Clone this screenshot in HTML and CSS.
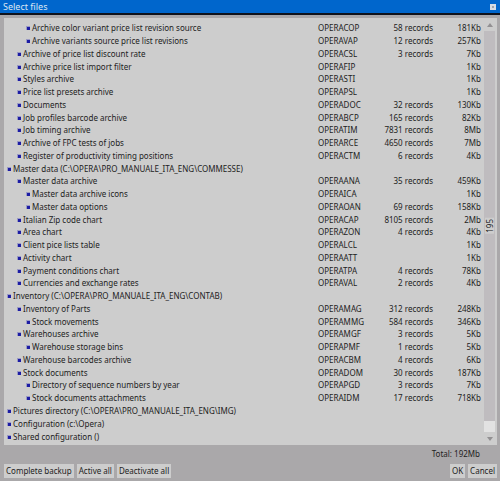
FILE: index.html
```html
<!DOCTYPE html>
<html lang="en">
<head>
  <meta charset="UTF-8">
  <title>Select files</title>
  <link rel="stylesheet" href="styles.css">
</head>
<body>
<div class="titlebar">
  <h1>Select files</h1>
  <button class="close" type="button" aria-label="Close">
    <svg width="6" height="6" viewBox="0 0 6 6"><rect width="6" height="6" fill="#d4dce4"/><rect x="2" y="2" width="2" height="2" fill="#9aa4b0"/></svg>
  </button>
</div>
<div class="panel">
  <div class="list">
    <table class="files">
      <colgroup>
        <col>
        <col class="col-code">
        <col class="col-records">
        <col class="col-size">
      </colgroup>
      <tbody>
        <tr class="l3"><td>Archive color variant price list revision source</td><td>OPERACOP</td><td>58 records</td><td>181Kb</td></tr>
        <tr class="l3"><td>Archive variants source price list revisions</td><td>OPERAVAP</td><td>12 records</td><td>257Kb</td></tr>
        <tr class="l2"><td>Archive of price list discount rate</td><td>OPERACSL</td><td>3 records</td><td>7Kb</td></tr>
        <tr class="l2"><td>Archive price list import filter</td><td>OPERAFIP</td><td></td><td>1Kb</td></tr>
        <tr class="l2"><td>Styles archive</td><td>OPERASTI</td><td></td><td>1Kb</td></tr>
        <tr class="l2"><td>Price list presets archive</td><td>OPERAPSL</td><td></td><td>1Kb</td></tr>
        <tr class="l2"><td>Documents</td><td>OPERADOC</td><td>32 records</td><td>130Kb</td></tr>
        <tr class="l2"><td>Job profiles barcode archive</td><td>OPERABCP</td><td>165 records</td><td>82Kb</td></tr>
        <tr class="l2"><td>Job timing archive</td><td>OPERATIM</td><td>7831 records</td><td>8Mb</td></tr>
        <tr class="l2"><td>Archive of FPC tests of jobs</td><td>OPERARCE</td><td>4650 records</td><td>7Mb</td></tr>
        <tr class="l2"><td>Register of productivity timing positions</td><td>OPERACTM</td><td>6 records</td><td>4Kb</td></tr>
        <tr class="l1"><td>Master data (C:\OPERA\PRO_MANUALE_ITA_ENG\COMMESSE)</td><td></td><td></td><td></td></tr>
        <tr class="l2"><td>Master data archive</td><td>OPERAANA</td><td>35 records</td><td>459Kb</td></tr>
        <tr class="l3"><td>Master data archive icons</td><td>OPERAICA</td><td></td><td>1Kb</td></tr>
        <tr class="l3"><td>Master data options</td><td>OPERAOAN</td><td>69 records</td><td>158Kb</td></tr>
        <tr class="l2"><td>Italian Zip code chart</td><td>OPERACAP</td><td>8105 records</td><td>2Mb</td></tr>
        <tr class="l2"><td>Area chart</td><td>OPERAZON</td><td>4 records</td><td>4Kb</td></tr>
        <tr class="l2"><td>Client pice lists table</td><td>OPERALCL</td><td></td><td>1Kb</td></tr>
        <tr class="l2"><td>Activity chart</td><td>OPERAATT</td><td></td><td>1Kb</td></tr>
        <tr class="l2"><td>Payment conditions chart</td><td>OPERATPA</td><td>4 records</td><td>78Kb</td></tr>
        <tr class="l2"><td>Currencies and exchange rates</td><td>OPERAVAL</td><td>2 records</td><td>4Kb</td></tr>
        <tr class="l1"><td>Inventory (C:\OPERA\PRO_MANUALE_ITA_ENG\CONTAB)</td><td></td><td></td><td></td></tr>
        <tr class="l2"><td>Inventory of Parts</td><td>OPERAMAG</td><td>312 records</td><td>248Kb</td></tr>
        <tr class="l3"><td>Stock movements</td><td>OPERAMMG</td><td>584 records</td><td>346Kb</td></tr>
        <tr class="l2"><td>Warehouses archive</td><td>OPERAMGF</td><td>3 records</td><td>5Kb</td></tr>
        <tr class="l3"><td>Warehouse storage bins</td><td>OPERAPMF</td><td>1 records</td><td>5Kb</td></tr>
        <tr class="l2"><td>Warehouse barcodes archive</td><td>OPERACBM</td><td>4 records</td><td>6Kb</td></tr>
        <tr class="l2"><td>Stock documents</td><td>OPERADOM</td><td>30 records</td><td>187Kb</td></tr>
        <tr class="l3"><td>Directory of sequence numbers by year</td><td>OPERAPGD</td><td>3 records</td><td>7Kb</td></tr>
        <tr class="l3"><td>Stock documents attachments</td><td>OPERAIDM</td><td>17 records</td><td>718Kb</td></tr>
        <tr class="l1"><td>Pictures directory (C:\OPERA\PRO_MANUALE_ITA_ENG\IMG)</td><td></td><td></td><td></td></tr>
        <tr class="l1"><td>Configuration (c:\Opera)</td><td></td><td></td><td></td></tr>
        <tr class="l1"><td>Shared configuration ()</td><td></td><td></td><td></td></tr>
      </tbody>
    </table>
  </div>
  <div class="scrollbar">
    <button class="arrow" type="button" aria-label="Scroll up"><svg width="6" height="4" viewBox="0 0 6 4"><path d="M0 4L3 0L6 4Z" fill="#929092"/></svg></button>
    <div class="track">
      <span class="count">195</span>
      <div class="thumb"></div>
    </div>
    <button class="arrow" type="button" aria-label="Scroll down"><svg width="6" height="4" viewBox="0 0 6 4"><path d="M0 0L3 4L6 0Z" fill="#929092"/></svg></button>
  </div>
</div>
<p class="total">Total: 192Mb</p>
<div class="buttons">
  <button type="button">Complete backup</button>
  <button type="button">Active all</button>
  <button type="button">Deactivate all</button>
  <button class="ok" type="button">OK</button>
  <button type="button">Cancel</button>
</div>
</body>
</html>
```
FILE: styles.css
```css
*,
*::before {
  box-sizing: border-box;
  margin: 0;
  padding: 0;
}

body {
  display: flex;
  flex-direction: column;
  min-height: 100vh;
  background: #aaa8aa;
  color: #222;
  font-family: "Noto Sans", "Open Sans", sans-serif;
  font-size: 8px;
  line-height: 12px;
}

button {
  border: 0;
  color: inherit;
  font: inherit;
}

.titlebar {
  display: flex;
  align-items: center;
  justify-content: space-between;
  height: 15px;
  padding: 0 4px 0 3px;
  background: #0066cc;
  border-bottom: 2px solid #10131c;
}

.titlebar h1 {
  color: #dce8f4;
  font-size: 9px;
  font-weight: normal;
}

.close {
  display: flex;
  background: none;
}

.panel {
  flex: 1;
  display: flex;
  margin: 3px 3px 0 4px;
  background: #cdcdcd;
}

.list {
  flex: 1;
  display: flex;
  padding: 4px 0 2px;
}

.files {
  width: 100%;
  table-layout: fixed;
  border-collapse: collapse;
}

.col-code {
  width: 60px;
}

.col-records {
  width: 55px;
}

.col-size {
  width: 51px;
}

.files td {
  white-space: nowrap;
}

.files td:nth-child(n+3) {
  text-align: right;
}

.files td:last-child {
  padding-right: 3px;
}

.files td:first-child::before {
  content: "";
  display: inline-block;
  width: 4px;
  height: 4px;
  margin-right: 2px;
  border: 1px solid #9a9ac4;
  border-width: 1px 0 0 1px;
  background: #1c1ca4;
  vertical-align: 1px;
}

.l1 td:first-child {
  padding-left: 3px;
}

.l2 td:first-child {
  padding-left: 13px;
}

.l3 td:first-child {
  padding-left: 22px;
}

.scrollbar {
  display: flex;
  flex-direction: column;
  width: 13px;
  padding-right: 2px;
}

.arrow {
  display: flex;
  align-items: center;
  justify-content: center;
  height: 13px;
  background: none;
}

.track {
  flex: 1;
  display: flex;
  flex-direction: column;
  align-items: center;
  justify-content: center;
  position: relative;
  padding-bottom: 11px;
  background: #bfbcbf;
}

.count {
  padding: 1px 0;
  background: #cdcdcd;
  line-height: 9px;
  writing-mode: vertical-rl;
  transform: rotate(180deg);
}

.thumb {
  position: absolute;
  right: 0;
  bottom: 0;
  left: 0;
  height: 11px;
  background: #e2e2e2;
}

.total {
  padding: 3px 20px 4px 0;
  text-align: right;
}

.buttons {
  display: flex;
  gap: 3px;
  padding: 0 3px 3px 4px;
}

.buttons button {
  height: 14px;
  padding: 0 2px;
  background: #cdcdcd;
  white-space: nowrap;
}

.buttons .ok {
  margin-left: auto;
}
```
